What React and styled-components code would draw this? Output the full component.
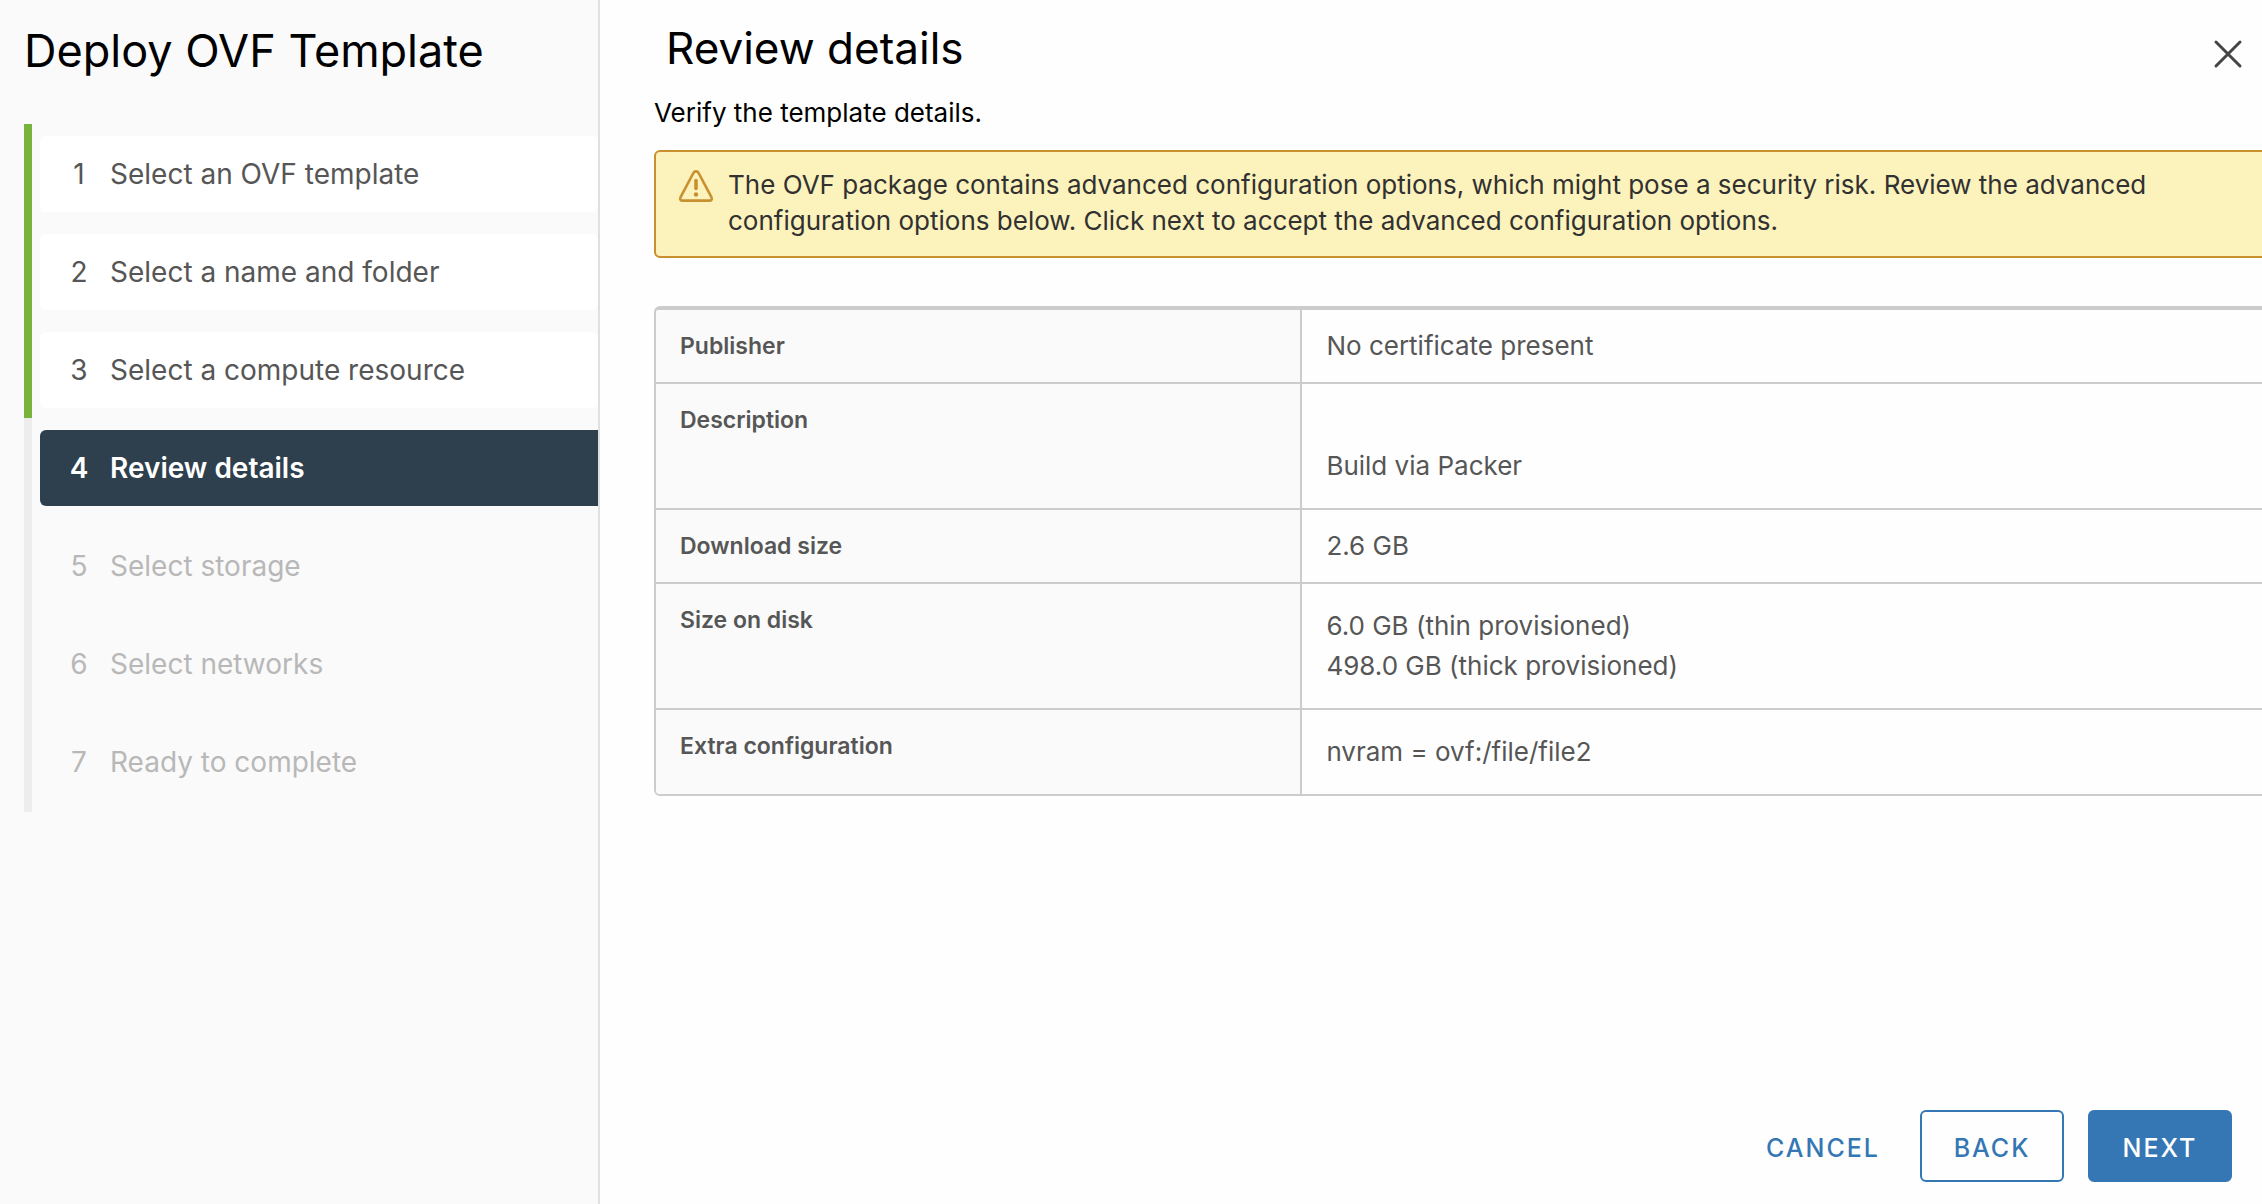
import React from "react";
import styled, { createGlobalStyle } from "styled-components";

const GlobalStyle = createGlobalStyle`
  *, *::before, *::after { box-sizing: border-box; }
  body {
    margin: 0;
    background: #fefefe;
    font-family: Inter, "Open Sans", sans-serif;
    color: #000;
  }
  button { font: inherit; cursor: pointer; }
`;

const Wizard = styled.div`
  display: flex;
  min-height: 100vh;
`;

const Sidebar = styled.aside`
  flex: 0 0 600px;
  padding: 24px 0 24px 24px;
  background: #fafafa;
  border-right: 2px solid #e0e0e0;
`;

const WizardTitle = styled.h1`
  margin: 0 0 46px;
  font-size: 45px;
  line-height: 54px;
  font-weight: 400;
`;

const StepList = styled.ol`
  margin: 0;
  padding: 0;
  list-style: none;
`;

const StepItem = styled.li`
  padding: 12px 0 10px 8px;
  border-left: 8px solid ${(p) => (p.$state === "done" ? "#78b43b" : "#ededed")};
  &:last-child { padding-bottom: 12px; }
`;

const stepColors = {
  done: { text: "#565656", back: "#ffffff", weight: 400, radius: "6px" },
  current: { text: "#ffffff", back: "#2e3f4e", weight: 600, radius: "6px 0 0 6px" },
  todo: { text: "#b8b8b8", back: "transparent", weight: 400, radius: "6px" },
};

const StepButton = styled.button`
  display: flex;
  align-items: center;
  gap: 20px;
  width: 100%;
  height: 76px;
  padding: 0 28px;
  border: 0;
  text-align: left;
  font-size: 28px;
  line-height: 36px;
  font-weight: ${(p) => stepColors[p.$state].weight};
  color: ${(p) => stepColors[p.$state].text};
  background: ${(p) => stepColors[p.$state].back};
  border-radius: ${(p) => stepColors[p.$state].radius};
`;

const StepNumber = styled.span`
  width: 22px;
  text-align: center;
`;

const Main = styled.main`
  flex: 1;
  min-width: 0;
  display: flex;
  flex-direction: column;
  padding: 24px 0 22px 54px;
  overflow: hidden;
`;

const Header = styled.header`
  display: flex;
  align-items: flex-end;
  justify-content: space-between;
  padding: 0 16px 0 12px;
`;

const PageTitle = styled.h2`
  margin: 0;
  font-size: 44px;
  line-height: 48px;
  font-weight: 400;
`;

const CloseButton = styled.button`
  display: flex;
  padding: 0;
  border: 0;
  background: none;
  color: #454545;
`;

const Intro = styled.p`
  margin: 22px 0 18px;
  font-size: 26px;
  line-height: 38px;
`;

const Content = styled.div`
  flex: 1;
  margin-right: -12px;
`;

const Alert = styled.div`
  display: flex;
  align-items: flex-start;
  gap: 14px;
  margin-bottom: 48px;
  padding: 15px 96px 17px 22px;
  border: 2px solid #c99030;
  border-radius: 6px;
  background: #fcf2bb;
  color: #313131;
  font-size: 26px;
  line-height: 36px;
`;

const AlertIcon = styled.svg`
  flex: none;
  color: #c99030;
`;

const AlertText = styled.p`
  margin: 0;
`;

const Details = styled.table`
  width: 100%;
  border: 2px solid #cccccc;
  border-top-width: 4px;
  border-radius: 6px;
  border-spacing: 0;
  overflow: hidden;
  table-layout: fixed;
  color: #565656;
  line-height: 40px;
  text-align: left;
  tr:last-child > * { border-bottom: 0; }
`;

const Label = styled.th`
  width: 40%;
  padding: 16px 24px;
  border-right: 2px solid #cccccc;
  border-bottom: 2px solid #cccccc;
  background: #fafafa;
  vertical-align: top;
  font-size: 23px;
  font-weight: 600;
`;

const Value = styled.td`
  padding: ${(p) => (p.$block ? "22px" : "16px")} 24px;
  border-bottom: 2px solid #cccccc;
  vertical-align: top;
  font-size: 26px;
  white-space: pre-line;
`;

const Footer = styled.footer`
  display: flex;
  justify-content: flex-end;
  gap: 24px;
  padding-right: 30px;
`;

const buttonLooks = {
  link: { text: "#3577b4", back: "transparent", edge: "transparent", pad: "14px" },
  outline: { text: "#3577b4", back: "transparent", edge: "#3577b4", pad: "30px" },
  solid: { text: "#ffffff", back: "#3577b4", edge: "#3577b4", pad: "30px" },
};

const ActionButton = styled.button`
  min-width: 144px;
  height: 72px;
  padding: 4px ${(p) => buttonLooks[p.$look].pad} 0;
  border: 2px solid ${(p) => buttonLooks[p.$look].edge};
  border-radius: 6px;
  background: ${(p) => buttonLooks[p.$look].back};
  color: ${(p) => buttonLooks[p.$look].text};
  font-size: 25px;
  font-weight: 500;
  letter-spacing: 2px;
  text-transform: uppercase;
`;

const steps = [
  { label: "Select an OVF template", state: "done" },
  { label: "Select a name and folder", state: "done" },
  { label: "Select a compute resource", state: "done" },
  { label: "Review details", state: "current" },
  { label: "Select storage", state: "todo" },
  { label: "Select networks", state: "todo" },
  { label: "Ready to complete", state: "todo" },
];

const details = [
  { label: "Publisher", value: "No certificate present" },
  { label: "Description", value: "\nBuild via Packer", block: true },
  { label: "Download size", value: "2.6 GB" },
  {
    label: "Size on disk",
    value: "6.0 GB (thin provisioned)\n498.0 GB (thick provisioned)",
    block: true,
  },
  { label: "Extra configuration", value: "nvram = ovf:/file/file2", block: true },
];

export default function App() {
  return (
    <>
      <GlobalStyle />
      <Wizard>
        <Sidebar>
          <WizardTitle>Deploy OVF Template</WizardTitle>
          <StepList>
            {steps.map((step, i) => (
              <StepItem key={step.label} $state={step.state}>
                <StepButton
                  type="button"
                  $state={step.state}
                  disabled={step.state === "todo"}
                  aria-current={step.state === "current" ? "step" : undefined}
                >
                  <StepNumber>{i + 1}</StepNumber>
                  <span>{step.label}</span>
                </StepButton>
              </StepItem>
            ))}
          </StepList>
        </Sidebar>
        <Main>
          <Header>
            <PageTitle>Review details</PageTitle>
            <CloseButton type="button" aria-label="Close">
              <svg width="36" height="36" viewBox="0 0 36 36" fill="none" stroke="currentColor" strokeWidth="3" strokeLinecap="round">
                <path d="M6 6 L30 30 M30 6 L6 30" />
              </svg>
            </CloseButton>
          </Header>
          <Intro>Verify the template details.</Intro>
          <Content>
            <Alert role="alert">
              <AlertIcon width="36" height="38" viewBox="0 0 36 38" fill="none" stroke="currentColor" strokeLinejoin="round" strokeLinecap="round">
                <path d="M15.4 6 L2.6 30.2 C1.6 32.3 2.6 33.6 4.6 33.6 L31.4 33.6 C33.4 33.6 34.4 32.3 33.4 30.2 L20.6 6 C19.4 3.8 16.6 3.8 15.4 6 Z" strokeWidth="2.6" />
                <path d="M18 13.5 V21.5" strokeWidth="3.6" />
                <circle cx="18" cy="27.5" r="2.2" fill="currentColor" stroke="none" />
              </AlertIcon>
              <AlertText>
                The OVF package contains advanced configuration options, which might pose a security
                risk. Review the advanced configuration options below. Click next to accept the
                advanced configuration options.
              </AlertText>
            </Alert>
            <Details>
              <tbody>
                {details.map((row) => (
                  <tr key={row.label}>
                    <Label scope="row">{row.label}</Label>
                    <Value $block={row.block}>{row.value}</Value>
                  </tr>
                ))}
              </tbody>
            </Details>
          </Content>
          <Footer>
            <ActionButton type="button" $look="link">Cancel</ActionButton>
            <ActionButton type="button" $look="outline">Back</ActionButton>
            <ActionButton type="button" $look="solid">Next</ActionButton>
          </Footer>
        </Main>
      </Wizard>
    </>
  );
}
